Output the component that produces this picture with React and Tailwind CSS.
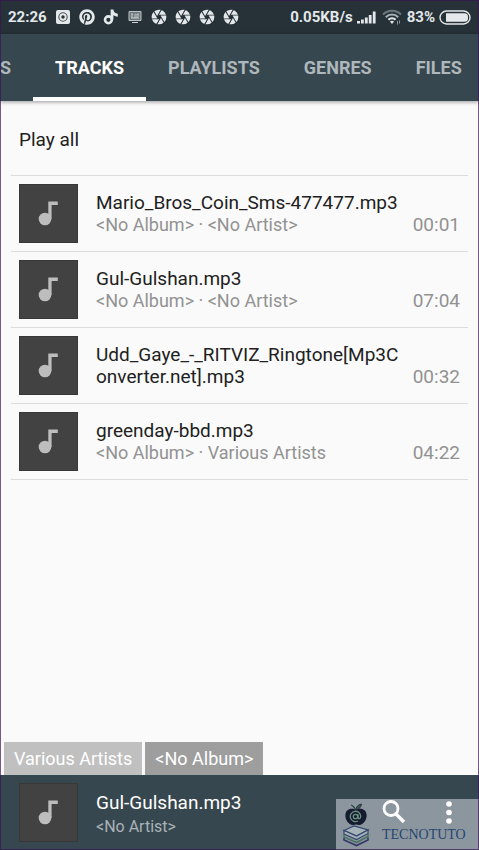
import React, { useState } from "react";
import { FaPinterest } from "react-icons/fa";
import { MdCamera } from "react-icons/md";

const tabs = [
  { id: "tracks", label: "TRACKS" },
  { id: "playlists", label: "PLAYLISTS" },
  { id: "genres", label: "GENRES" },
  { id: "files", label: "FILES" },
];

const tracks = [
  {
    title: "Mario_Bros_Coin_Sms-477477.mp3",
    info: "<No Album> · <No Artist>",
    time: "00:01",
  },
  { title: "Gul-Gulshan.mp3", info: "<No Album> · <No Artist>", time: "07:04" },
  { title: "Udd_Gaye_-_RITVIZ_Ringtone[Mp3Converter.net].mp3", time: "00:32" },
  {
    title: "greenday-bbd.mp3",
    info: "<No Album> · Various Artists",
    time: "04:22",
  },
];

function Cover() {
  return (
    <span className="block shrink-0 size-[59px] bg-[#424242] border border-[#383838]">
      <svg viewBox="1 1 57 57" className="size-full" fill="#bdbdbd">
        <circle cx="26" cy="35" r="6.3" />
        <path d="M29.3 17.5h9.5v3.4h-6.2V35h-3.3z" />
      </svg>
    </span>
  );
}

function StatusBar() {
  return (
    <div className="flex items-center justify-between h-[34px] px-2 bg-[#263238] text-[#e4e8ea] text-[15px] font-bold">
      <div className="flex items-center gap-2">
        <span>22:26</span>
        <svg viewBox="0 0 16 16" className="size-4">
          <rect x="1" y="1" width="14" height="14" rx="2" fill="currentColor" />
          <circle cx="8" cy="8" r="4.2" fill="none" stroke="#4a555a" strokeWidth="1.1" />
          <circle cx="8" cy="8" r="1.7" fill="#263238" />
        </svg>
        <FaPinterest className="size-4" />
        <svg viewBox="0 0 16 16" className="size-4">
          <circle cx="5.4" cy="10.8" r="3.4" fill="none" stroke="currentColor" strokeWidth="2.6" />
          <path d="M7.600 .5h2.800c.3 2.500 1.800 3.900 4.400 4.200v3c-1.700 0-3-.5-4.400-1.400v4.500H7.600z" fill="currentColor" />
        </svg>
        <svg viewBox="0 0 16 16" className="size-4" opacity="0.8">
          <path d="M2 2.500h12v9H2z" fill="#7d888d" stroke="currentColor" />
          <path d="M4 5h2M5 5v4M8 4.500v4.500M10 9V5h2M4 9h8M5 13.500h6M11 7h1" stroke="#f2f4f5" fill="none" />
        </svg>
        <MdCamera className="size-4 scale-110" />
        <MdCamera className="size-4 scale-110" />
        <MdCamera className="size-4 scale-110" />
        <MdCamera className="size-4 scale-110" />
      </div>
      <div className="flex items-center gap-1">
        <span>0.05KB/s</span>
        <svg viewBox="0 0 20 14" className="w-5 h-[14px]" fill="currentColor">
          <path d="M0 11h3v2.5H0zM4 9.5h2.8v4H4zM7.9 7.5h2.8v6H7.9zM11.8 5h2.8v8.5h-2.8zM15.800 1.5h2.8v12h-2.8z" />
        </svg>
        <svg viewBox="0 0 20 16" className="w-5 h-4 mx-px" fill="none" strokeWidth="2">
          <path d="M1 5.5a12.5 12.5 0 0 1 18 0" stroke="#6b777d" />
          <path d="M3.8 8.2a8.6 8.6 0 0 1 12.4 0" stroke="#a5aeb2" />
          <path d="M6.4 10.8a5 5 0 0 1 7.2 0" stroke="currentColor" />
          <path d="M8 12.6a3 3 0 0 1 4 0L10 15z" fill="currentColor" />
          <path d="M15.5 12v3.5M17.5 11.5v3" stroke="#89949a" strokeWidth="1" />
        </svg>
        <span>83%</span>
        <svg viewBox="0 0 32 15" className="w-8 h-[15px]">
          <rect x="1" y="1" width="30" height="13" rx="6.5" fill="none" stroke="currentColor" strokeWidth="1.4" />
          <path d="M7 3.200h18.500a3.500 3.500 0 0 1 3.500 3.500v1.600a3.500 3.500 0 0 1-3.500 3.500H7z" fill="currentColor" />
        </svg>
      </div>
    </div>
  );
}

function BooksLogo() {
  return (
    <svg viewBox="0 0 28 44" className="w-7 h-11 shrink-0">
      <path d="M13.500 7C13 4 11.500 3 9 2M14 7c0-3 2-5.500 5.500-6-.5 3-2 5-5.500 6" fill="#3d5948" stroke="#273544" />
      <path d="M14 7c3-2 9.500-2 10.500 4 1 5-3 11-7.500 11-1 0-2-.6-3-.6s-2 .6-3 .6c-4.500 0-8.500-6-7.500-11 1-6 7.500-6 10.500-4z" fill="#161c30" />
      <circle cx="13.500" cy="13.500" r="2.200" fill="none" stroke="#6c9080" strokeWidth="1.300" />
      <path d="M16 11v3.500c0 1.800 2.700 1.500 2.700-1a5.200 5.200 0 1 0-2.700 4.500" fill="none" stroke="#6c9080" strokeWidth="1.300" />
      <path d="M2 27.500 12 23l14 4-11.500 6z" fill="#a7b3bb" stroke="#34476b" strokeWidth="1.200" />
      <path d="M2 27.500v3.500l12.500 5.500L26 30.500V27l-11.500 6z" fill="#a7b3bb" stroke="#34476b" strokeWidth="1.200" />
      <path d="M2 31.500v2.500l12.500 5.500L26 33.500v-2.500" fill="none" stroke="#487561" strokeWidth="1.600" />
      <path d="M2 35v2l12.500 5.500L26 37v-2.500" fill="none" stroke="#35366a" strokeWidth="1.600" />
    </svg>
  );
}

export default function App() {
  const [activeTab, setActiveTab] = useState("tracks");

  return (
    <div className="relative flex flex-col min-h-screen bg-[#fafafa] font-[Roboto,sans-serif] overflow-hidden">
      <StatusBar />

      <nav className="flex h-[67px] bg-[#37474f] text-lg font-bold shadow-[0_1px_4px_rgba(0,0,0,0.4)] overflow-hidden">
        <button className="shrink-0 pr-[22px] text-[#aeb7bb]">S</button>
        {tabs.map((tab) => (
          <button
            key={tab.id}
            onClick={() => setActiveTab(tab.id)}
            className={
              activeTab === tab.id
                ? "shrink-0 px-[22px] border-y-4 border-t-transparent border-b-white text-white"
                : "shrink-0 px-[22px] border-y-4 border-transparent text-[#aeb7bb]"
            }
          >
            {tab.label}
          </button>
        ))}
      </nav>

      <main className="grow px-[11px]">
        <button className="block w-full h-[74px] px-2 pt-1 text-left text-[19px] text-[#212121]">
          Play all
        </button>
        <ul className="border-t border-[#dcdcdc]">
          {tracks.map((track) => (
            <li key={track.title} className="border-b border-[#dcdcdc]">
              <button className="flex items-center w-full p-2 text-left text-[19px] leading-[22px]">
                <Cover />
                <span className="flex grow items-end min-w-0 ml-[18px]">
                  <span className="grow min-w-0">
                    <span className="block break-all text-[#212121]">{track.title}</span>
                    {track.info && (
                      <span className="block text-lg leading-[22px] text-[#929292]">
                        {track.info}
                      </span>
                    )}
                  </span>
                  <span className="ml-2 text-[#929292]">{track.time}</span>
                </span>
              </button>
            </li>
          ))}
        </ul>
      </main>

      <div className="flex gap-[3px] px-1 text-lg leading-[33px] text-white">
        <button className="h-[33px] px-[10px] bg-[#c0c0c0]">Various Artists</button>
        <button className="h-[33px] px-[10px] bg-[#9e9e9e]">&lt;No Album&gt;</button>
      </div>

      <footer className="flex items-center h-[75px] pl-[19px] bg-[#37474f]">
        <Cover />
        <div className="grow ml-[18px] pt-1">
          <p className="text-[19px] leading-6 text-white">Gul-Gulshan.mp3</p>
          <p className="text-base leading-6 text-[#a9b3b8]">&lt;No Artist&gt;</p>
        </div>
        <div className="flex self-end w-[143px] h-[51px] pl-[6px] pt-1 bg-[#8c969f]">
          <BooksLogo />
          <div className="grow pl-3">
            <div className="flex items-start justify-between h-6 pr-6 text-white">
              <button aria-label="Search" className="-mt-1">
                <svg viewBox="0 0 24 26" className="w-6 h-[26px]" fill="none" stroke="currentColor">
                  <circle cx="9" cy="9.5" r="7" strokeWidth="2.8" />
                  <path d="m14 15 8 8" strokeWidth="3.4" />
                </svg>
              </button>
              <button aria-label="More" className="-mt-1">
                <svg viewBox="0 0 12 26" className="w-3 h-[26px]" fill="currentColor">
                  <circle cx="6" cy="5" r="2.8" />
                  <circle cx="6" cy="13.5" r="2.8" />
                  <circle cx="6" cy="22" r="2.8" />
                </svg>
              </button>
            </div>
            <p className="text-sm leading-4 font-[Liberation_Serif,serif] text-[#26456f]">
              TECNOTUTO
            </p>
          </div>
        </div>
      </footer>

      <div className="absolute inset-0 border border-[#3b1457]/70 pointer-events-none" />
    </div>
  );
}
